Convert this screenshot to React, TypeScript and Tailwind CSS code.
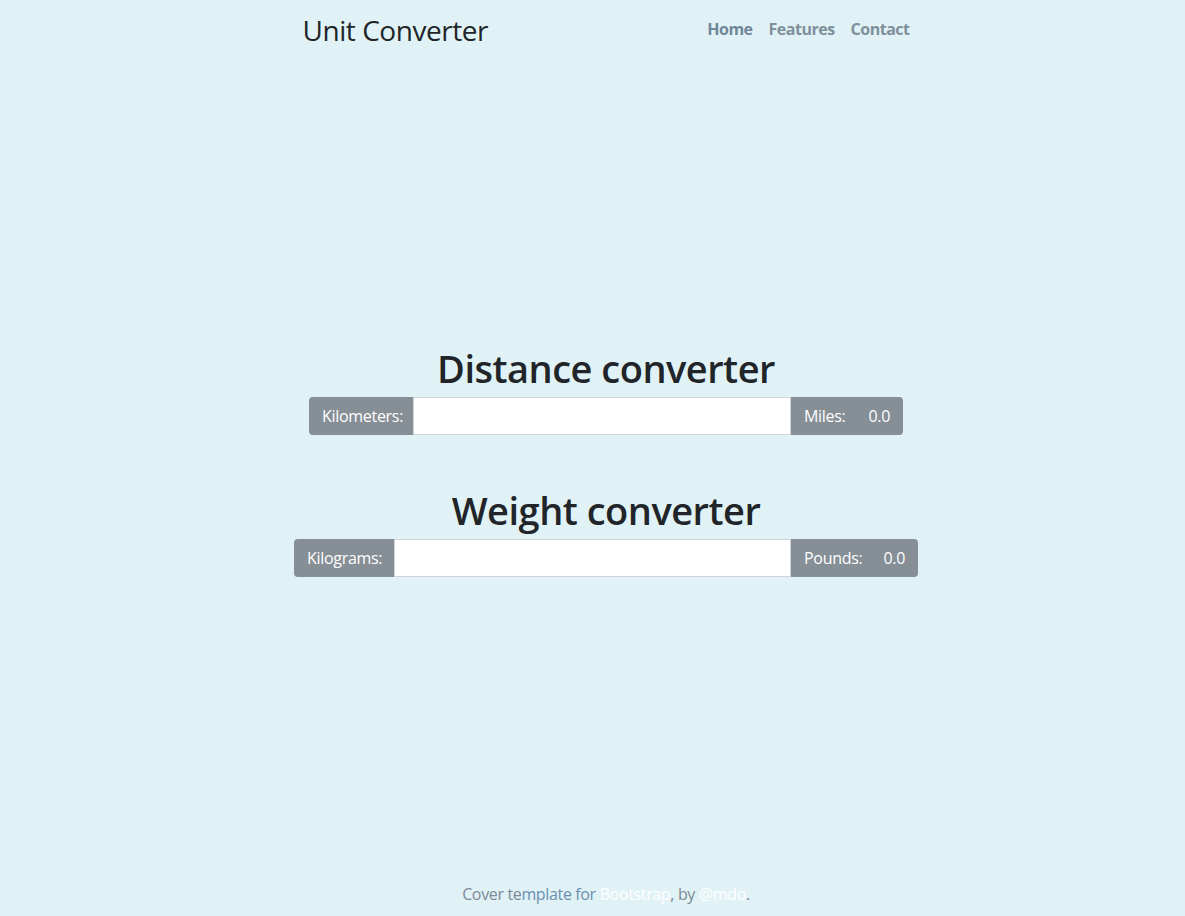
import React from "react";

const font = { fontFamily: '"Open Sans", "Noto Sans", sans-serif' };

function Group({ left, right, leftW, inputW, rightLabel, rightW }: { left: string; right: string; leftW: number; inputW: number; rightLabel: string; rightW: number }) {
  return (
    <div className="flex h-[38px] text-[16px] text-white tracking-[-0.3px]">
      <div className="flex items-center pl-[13px] bg-[#868e96] rounded-l-[4px]" style={{ width: leftW }}>{left}</div>
      <div className="bg-white border border-[#ced4da] h-[38px]" style={{ width: inputW }} />
      <div className="flex items-center justify-between bg-[#868e96] rounded-r-[4px] px-[13px]" style={{ width: rightW }}>
        <span>{rightLabel}</span>
        <span>{right}</span>
      </div>
    </div>
  );
}

export default function App() {
  return (
    <div className="w-[1185px] h-[916px] bg-[#e0f2f5] flex flex-col pl-[27px]" style={font}>
      <header className="w-[607px] mx-auto flex justify-between items-center h-[60px]">
        <h3 className="text-[28px] text-[#212529] leading-none tracking-[-0.45px]">Unit Converter</h3>
        <nav className="flex gap-[16px] text-[16px] font-bold text-[#7f8f9c] tracking-[-0.5px] pb-[3px]">
          <span className="text-[#6f8799]">Home</span>
          <span>Features</span>
          <span>Contact</span>
        </nav>
      </header>
      <main className="flex flex-col items-center mt-[284px]">
        <h1 className="text-[38px] font-semibold text-[#212529] leading-[48px] mb-[5px] tracking-[-0.5px]">Distance converter</h1>
        <Group left="Kilometers:" leftW={104} inputW={378} rightLabel="Miles:" right="0.0" rightW={112} />
        <h1 className="text-[38px] font-semibold text-[#212529] leading-[48px] mb-[5px] mt-[51px] tracking-[-0.5px]">Weight converter</h1>
        <Group left="Kilograms:" leftW={100} inputW={397} rightLabel="Pounds:" right="0.0" rightW={127} />
      </main>
      <footer className="mt-auto mb-[10px] text-center text-[16px] text-[#7d8a96] tracking-[-0.35px]">
        Cover te<span className="text-[#6c8fb0]">mplate for </span><span className="text-white">Bootstrap</span>, by <span className="text-white">@mdo</span>.
      </footer>
    </div>
  );
}
